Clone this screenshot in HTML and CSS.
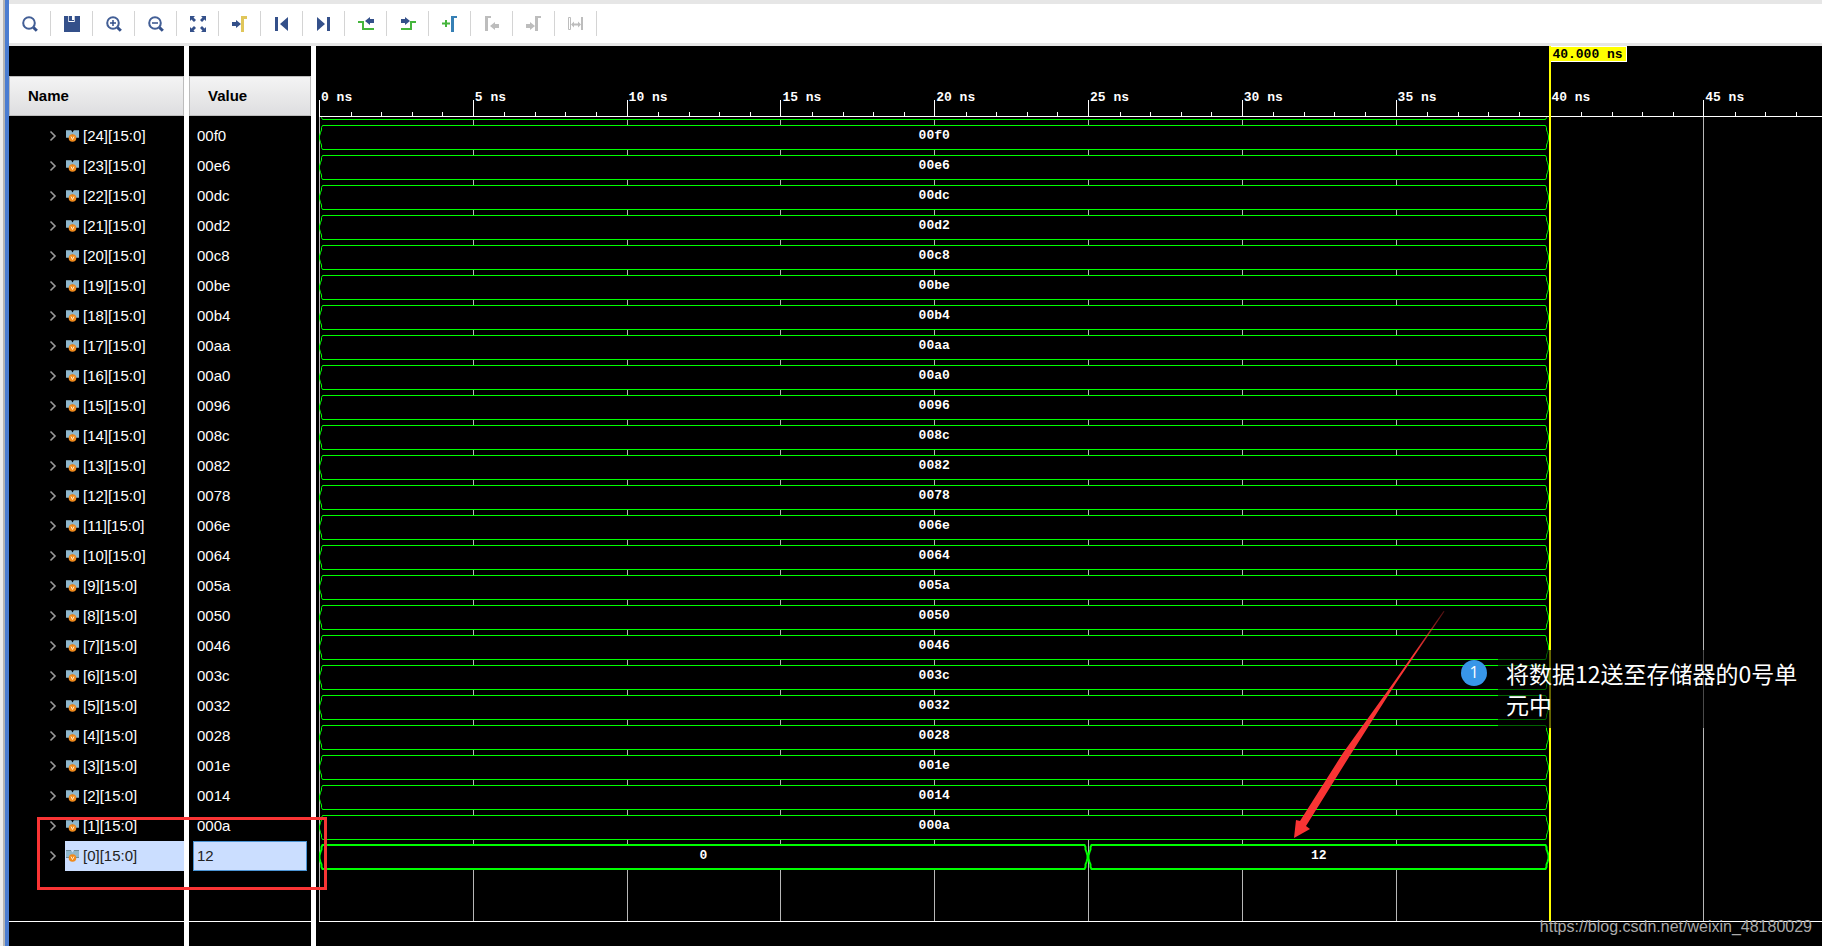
FILE: index.html
```html
<!DOCTYPE html>
<html lang="en">
<head>
<meta charset="utf-8">
<title>Waveform</title>
<link rel="stylesheet" href="styles.css">
</head>
<body>
<svg class="defs" aria-hidden="true">
  <symbol id="chevron" viewBox="0 0 8 12"><path d="M1.5 1.5 6 6 1.5 10.5" fill="none" stroke="#9a9a9a" stroke-width="1.6"/></symbol>
  <symbol id="bus" viewBox="0 0 13 12">
    <path d="M0 0h5l1.500 2.500L8 0h5v8h-2.500L9 6 6.500 4.500 4 6 2.500 8H0z" fill="#8fb7cc"/>
    <path d="M0 0h5v1H0zM8 0h5v1H8zM0 7h3v1H0zM10 7h3v1h-3z" fill="#6d8a99"/>
    <circle cx="6.500" cy="8" r="3.800" fill="#f08a1c"/>
    <path d="M5 6.500 6.500 9.500 8 6.500" fill="none" stroke="#ffe9c8"/>
  </symbol>
  <symbol id="cap-left" viewBox="0 0 4 25"><path d="M4 .5H3.500L2.500 2.500V5L1.500 7.500 .5 11v3l1 3.500 1 2.500v2.500l1 2H4" fill="none" stroke="#00ff00"/></symbol>
  <symbol id="cap-right" viewBox="0 0 4 25"><path d="M0 .5H.5L1.500 2.500V5l1 2.500 1 3.500v3l-1 3.500-1 2.500v2.500l-1 2H0" fill="none" stroke="#00ff00"/></symbol>
</svg>
<div class="app">
  <div class="toolbar" role="toolbar" aria-label="Waveform tools">
    <button type="button" aria-label="Search"><svg viewBox="0 0 16 16"><circle cx="7" cy="7" r="5.800" fill="none" stroke="#435f96" stroke-width="2"/><path d="m11.500 11.500 3.300 3.300" stroke="#34508a" stroke-width="3"/></svg></button>
    <button type="button" aria-label="Save"><svg viewBox="0 0 16 16"><path d="M0 0h4v6h7V0h5v16H0z" fill="#34508a"/><path d="M5 0h5v5H5z" fill="#34508a"/><path d="M4 0h1v6H4zM10 0h1v6h-1z" fill="#c5cde0"/><path d="M8 0h2v4H8z" fill="#fff"/></svg></button>
    <button type="button" aria-label="Zoom in"><svg viewBox="0 0 16 16"><circle cx="7" cy="7" r="5.800" fill="none" stroke="#435f96" stroke-width="2"/><path d="m11.500 11.500 3.300 3.300" stroke="#34508a" stroke-width="3"/><path d="M4 7h6M7 4v6" stroke="#34508a" stroke-width="1.500"/></svg></button>
    <button type="button" aria-label="Zoom out"><svg viewBox="0 0 16 16"><circle cx="7" cy="7" r="5.800" fill="none" stroke="#435f96" stroke-width="2"/><path d="m11.500 11.500 3.300 3.300" stroke="#34508a" stroke-width="3"/><path d="M4 7h6" stroke="#34508a" stroke-width="1.500"/></svg></button>
    <button type="button" aria-label="Zoom fit"><svg viewBox="0 0 16 16"><path d="M0 0h5L3.500 1.500 6 4 4 6 1.500 3.500 0 5zM16 0v5l-1.500-1.500L12 6l-2-2 2.500-2.500L11 0zM0 16v-5l1.500 1.500L4 10l2 2-2.500 2.500L5 16zM16 16h-5l1.500-1.500L10 12l2-2 2.500 2.500L16 11z" fill="#34508a"/></svg></button>
    <button type="button" aria-label="Go to cursor"><svg viewBox="0 0 16 16"><path d="M0 6h4V4l5 4-5 4v-2H0z" fill="#34508a"/><path d="M9 0h6v3h-3v13H9z" fill="#e0c65a"/></svg></button>
    <button type="button" aria-label="Go to time 0"><svg viewBox="0 0 16 16"><path d="M1 1h3v14H1zM14 1v14L6 8z" fill="#34508a"/></svg></button>
    <button type="button" aria-label="Go to last time"><svg viewBox="0 0 16 16"><path d="M11 1h3v14h-3zM1 1v14l8-7z" fill="#34508a"/></svg></button>
    <button type="button" aria-label="Previous transition"><svg viewBox="0 0 16 16"><path d="M0 6h5v7h11" fill="none" stroke="#45b53c" stroke-width="2"/><path d="M16 3h-4V1L7 5l5 4V7h4z" fill="#34508a"/></svg></button>
    <button type="button" aria-label="Next transition"><svg viewBox="0 0 16 16"><path d="M16 6h-5v7H1" fill="none" stroke="#45b53c" stroke-width="2"/><path d="M1 3h4V1l5 4-5 4V7H1z" fill="#34508a"/></svg></button>
    <button type="button" aria-label="Add marker"><svg viewBox="0 0 16 16"><path d="M0 7.500h8M4 4v7" stroke="#45b53c" stroke-width="2"/><path d="M9 0h6v2h-3v14H9z" fill="#3680b5"/></svg></button>
    <button type="button" aria-label="Previous marker" disabled><svg viewBox="0 0 16 16"><path d="M1 0h6v2H4v13H1zM15 8h-4V6l-5 4 5 4v-2h4z" fill="#bdbdbd"/></svg></button>
    <button type="button" aria-label="Next marker" disabled><svg viewBox="0 0 16 16"><path d="M9 0h6v2h-3v13H9zM0 8h4V6l5 4-5 4v-2H0z" fill="#bdbdbd"/></svg></button>
    <button type="button" aria-label="Swap cursors" disabled><svg viewBox="0 0 16 16"><path d="M.5 1.500h2v12h-2z" fill="none" stroke="#bdbdbd"/><path d="M13 1h2v13h-2zM3 8.500l3-3v2h4v-2l3 3-3 3v-2H6v2z" fill="#bdbdbd"/></svg></button>
  </div>

  <div class="viewer">
    <section class="column">
      <h2>Name</h2>
      <ul class="rows" id="names"></ul>
    </section>
    <section class="column">
      <h2>Value</h2>
      <ul class="rows" id="values"></ul>
    </section>
    <section class="wave">
      <div class="ruler" id="ruler"></div>
      <div class="plot">
        <div class="gridlines" id="gridlines"></div>
        <div class="traces" id="traces"></div>
      </div>
      <div class="cursor"><div class="cursor-line"><span>40.000 ns</span></div></div>
    </section>
  </div>

  <div class="selection-mark"></div>
  <svg class="arrow" viewBox="0 0 160 240" aria-hidden="true">
    <defs><linearGradient id="fade" gradientUnits="userSpaceOnUse" x1="154" y1="10" x2="124" y2="54"><stop offset="0" stop-color="#f93434" stop-opacity=".3"/><stop offset="1" stop-color="#f93434"/></linearGradient></defs>
    <path d="M154.500 11.500 153.500 11 104 82 53 153 10 221 6 220 4 238 20 229 16 226 59 157 106 83z" fill="url(#fade)"/>
  </svg>
  <div class="note">
    <span class="badge">1</span>
    <p>将数据12送至存储器的0号单<br>元中</p>
  </div>
  <div class="watermark">https://blog.csdn.net/weixin_48180029</div>
</div>
<script src="script.js"></script>
</body>
</html>
```
FILE: styles.css
```css
* { box-sizing: border-box; }
body { margin: 0; background: #000; font: 15px/30px "Liberation Sans", Arial, sans-serif; color: #fff; }
.defs { position: absolute; width: 0; height: 0; }
.app {
  position: relative; display: flex; flex-direction: column; min-height: 100vh; overflow: hidden;
  padding-left: 9px;
  background: linear-gradient(90deg, #ececec 0 3px, #b4b4b4 3px 5px, #4b7dd1 5px 9px, #000 9px);
}

.toolbar { display: flex; align-items: center; height: 46px; background: #fff; border-top: 4px solid #e6e6e6; border-bottom: 3px solid #e6e6e6; }
.toolbar button { width: 42px; height: 25px; padding: 0 12px 0 13px; border: 0; border-right: 1px solid #d4d4d4; background: none; }
.toolbar svg { display: block; width: 16px; height: 16px; }

.viewer { flex: 1; display: grid; grid-template-columns: 180px 127px 1fr; }
.column { padding-top: 30px; border-right: 5px solid #fff; }
.column h2 { margin: 0; height: 40px; padding-left: 18px; border: 1px solid #bdbdbd; background: linear-gradient(#f4f4f4, #dedee0); color: #000; font-size: 15px; line-height: 38px; }
.rows { list-style: none; margin: 0; padding: 5px 0 50px; border-bottom: 1px solid #fff; }
.rows li { height: 30px; }
#names li { display: flex; align-items: center; padding-left: 40px; }
.chevron { width: 8px; height: 12px; margin-right: 8px; }
.signal { flex: 1; display: flex; align-items: center; gap: 4px; padding-left: 1px; }
.signal svg { width: 13px; height: 12px; }
.selected .signal { background: #cbdeff; color: #222; }
#values li { padding-left: 8px; }
#values .selected { margin: 0 4px; padding-left: 3px; line-height: 28px; border: 1px solid #4b94d4; background: #cbdeff; color: #222; }

.wave { position: relative; padding-left: 3px; font: bold 13px/16px "Liberation Mono", monospace; }
.ruler, .gridlines { display: grid; grid-template-columns: repeat(9, 1538fr) 1188fr; }
.ruler { height: 71px; padding-top: 44px; border-bottom: 1px solid #fff; }
.tick { position: relative; padding-left: 2px; white-space: nowrap; }
.minor { position: absolute; left: 0; bottom: 0; width: 100%; height: 16px; display: grid; grid-template-columns: repeat(5, 1fr); align-items: end; border-left: 1px solid #fff; }
.minor i + i { height: 4px; border-left: 1px solid #fff; }
.tick:last-child .minor { grid-template-columns: repeat(3, 308fr) 264fr; }
.plot { position: relative; height: 805px; border-bottom: 1px solid #fff; }
.gridlines { position: absolute; inset: 0; }
.gridlines i { border-left: 1px solid #b8b8b8; }
.traces { position: relative; }
.stub { height: 4px; overflow: hidden; display: flex; flex-direction: column; justify-content: flex-end; }
.trace { display: grid; grid-template-columns: 12304fr 2726fr; height: 30px; padding-top: 4px; }
.stub .trace { flex: none; height: 26px; padding: 0 0 1px; }
.trace.split { grid-template-columns: 7690fr 4614fr 2726fr; padding-top: 3px; }
.bus { display: flex; height: 25px; }
.bus svg { width: 4px; height: 25px; overflow: visible; }
.bus span { flex: 1; border: solid #0f0; border-width: 1px 0; background: #000; text-align: center; line-height: 19px; }
.split .bus, .split .bus svg { height: 26px; }
.split .bus span { border-width: 2px 0; line-height: 20px; }
.split .bus svg { stroke-width: 2px; }
.cursor { position: absolute; top: 0; left: 3px; right: 0; height: 875px; display: grid; grid-template-columns: 12304fr 2726fr; pointer-events: none; }
.cursor-line { grid-column: 2; border-left: 2px solid #ff0; }
.cursor-line span { display: block; width: max-content; height: 16px; padding: 0 3px 0 1px; background: #ff0; border: solid #fff; border-width: 1px 1px 1px 0; color: #000; }

.selection-mark { position: absolute; left: 37px; top: 817px; width: 290px; height: 73px; border: 3px solid #f93434; }
.arrow { position: absolute; left: 1290px; top: 600px; width: 160px; height: 240px; }
.note { position: absolute; left: 1461px; top: 650px; display: flex; gap: 11px; font: 23px/31px "Noto Sans CJK SC", sans-serif; }
.note p { margin: 0; padding: 8px; background: rgba(0, 0, 0, .6); white-space: nowrap; }
.badge { width: 26px; height: 26px; margin-top: 10px; border-radius: 50%; background: #3896e8; font: 16px/24px "Open Sans", sans-serif; text-align: center; }
.watermark { position: absolute; right: 10px; bottom: 9px; font-size: 16px; line-height: 20px; color: #aaa; }
```
FILE: script.js
```js
const hex = n => n.toString(16).padStart(4, "0");
const signals = Array.from({ length: 25 }, (_, i) => 24 - i);
const valueOf = n => n ? hex(n * 10) : "12";
const bus = text =>
  `<div class="bus"><svg><use href="#cap-left"/></svg><span>${text}</span><svg><use href="#cap-right"/></svg></div>`;
const fill = (id, html) => { document.getElementById(id).innerHTML = html; };

fill("names", signals.map(n =>
  `<li class="${n ? "" : "selected"}"><svg class="chevron"><use href="#chevron"/></svg>` +
  `<span class="signal"><svg><use href="#bus"/></svg>[${n}][15:0]</span></li>`).join(""));

fill("values", signals.map(n => `<li class="${n ? "" : "selected"}">${valueOf(n)}</li>`).join(""));

// One cell per 5 ns; the last cell is cut off by the window edge.
fill("ruler", Array.from({ length: 10 }, (_, i) =>
  `<div class="tick">${i * 5} ns<div class="minor">${"<i></i>".repeat(i < 9 ? 5 : 4)}</div></div>`).join(""));

fill("gridlines", "<i></i>".repeat(10));

fill("traces", `<div class="stub"><div class="trace">${bus("")}</div></div>` + signals.map(n =>
  n ? `<div class="trace">${bus(valueOf(n))}</div>` : `<div class="trace split">${bus("0")}${bus("12")}</div>`).join(""));
```
